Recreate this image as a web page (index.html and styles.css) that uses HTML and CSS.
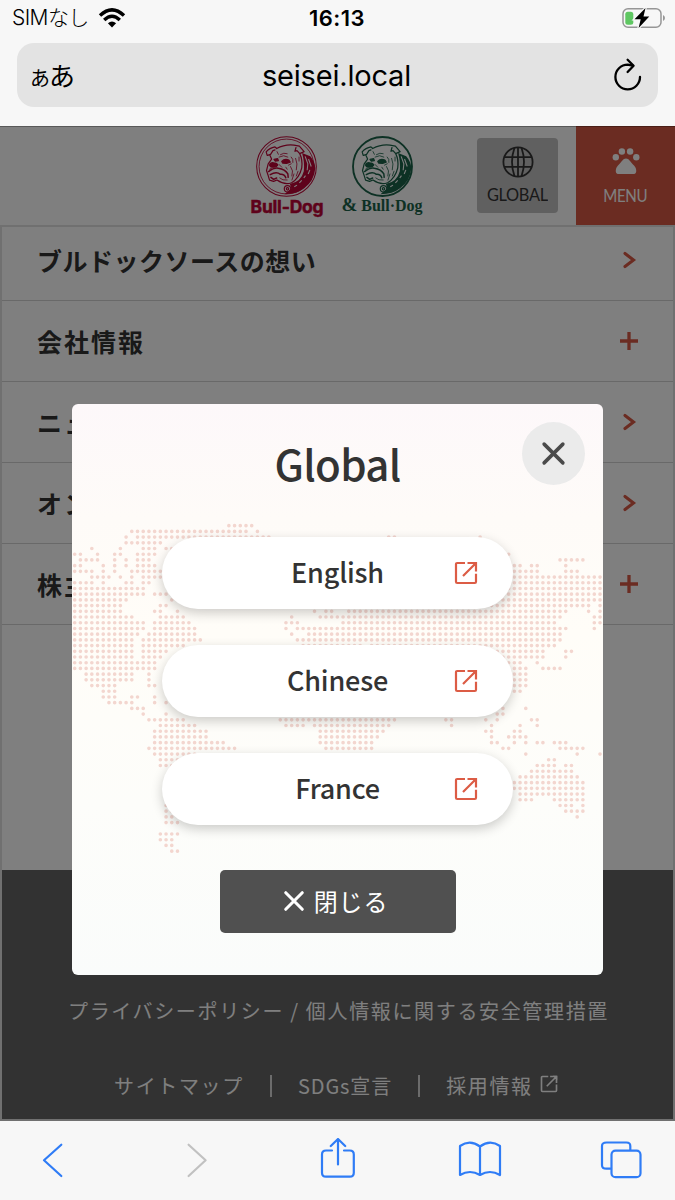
FILE: index.html
```html
<!DOCTYPE html>
<html lang="ja">
<head>
<meta charset="utf-8">
<meta name="viewport" content="width=device-width">
<title>ブルドックソース</title>
<link rel="stylesheet" href="styles.css">
</head>
<body>
<svg class="defs" aria-hidden="true">
  <symbol id="external" viewBox="0 0 24 24">
    <path d="M11 2H3.2Q2 2 2 3.2V20.8Q2 22 3.2 22H20.8Q22 22 22 20.8V12.8M13.5 2H22V10.5M22 2L9 15" fill="none" stroke="currentColor" stroke-width="2.2"/>
    <path d="M17 1H23V7Z" fill="currentColor"/>
  </symbol>
  <symbol id="cross" viewBox="0 0 24 24">
    <path d="M3 3L21 21M21 3L3 21" fill="none" stroke="currentColor" stroke-width="3.4" stroke-linecap="round"/>
  </symbol>
  <symbol id="chevron" viewBox="0 0 14 18">
    <path d="M2 2.5L10.5 9L2 15.5" fill="none" stroke="currentColor" stroke-width="3.1" stroke-linecap="round"/>
  </symbol>
  <symbol id="plus" viewBox="0 0 18 18">
    <path d="M9 0V18M0 9H18" fill="none" stroke="currentColor" stroke-width="3.3"/>
  </symbol>
  <symbol id="dog" viewBox="0 0 180 180">
    <path d="M136 50L160 60Q174 76 175 95Q172 132 142 154Q121 171 84 172L104 154L100 142Q134 134 141 104Q144 78 136 50Z" fill="currentColor"/>
    <g fill="none" stroke="currentColor" stroke-width="3.6" stroke-linecap="round" stroke-linejoin="round">
      <path d="M33 57L30 47Q40 35 56 32L61 37Q85 24 112 27L128 30L142 46L129 52L121 43L115 45L118 34M34 57L43 54L50 43L56 41M41 57L46 68L36 82L31 102L36 117L40 130L52 134L62 130Q85 146 105 138Q128 124 135 94Q138 70 129 52"/>
      <path d="M37 105Q54 92 66 95Q86 98 94 112L95 122M42 114Q60 104 72 113Q84 112 88 123M44 122L52 128L61 124" stroke-width="4.4"/>
      <path d="M40 86Q42 78 52 79Q63 79 64 86Q60 93 50 92Q42 93 40 86ZM76 75Q84 66 97 71L101 77L90 81L79 80ZM53 69L64 67L66 73L57 74Z" fill="currentColor"/>
      <path d="M68 62Q82 54 94 62M72 55Q82 48 92 52M104 62Q111 68 109 78M68 84L76 92M102 90Q112 102 106 118M117 66Q124 82 119 100M112 112L106 130M96 86L104 82M70 124Q78 132 92 130M62 46L66 54M127 62V74M124 104L119 118M88 92L92 98M40 98L46 95" stroke-width="2.4"/>
      <circle cx="93" cy="156" r="9.5"/><circle cx="93" cy="156" r="3.5"/>
    </g>
    <path class="cut" d="M145 60L153 82L151 101M155 68L163 90M159 100L154 112M113 150L121 145M128 138L135 131M141 124L146 117" fill="none" stroke="#fff" stroke-width="3.2"/>
  </symbol>
</svg>

<div class="phone">
  <header class="browser-top">
    <div class="status">
      <span class="carrier">SIMなし</span>
      <svg class="wifi" viewBox="0 0 28 20" width="28" height="20">
        <g fill="none" stroke="#000" stroke-width="3.4"><path d="M2 7.6Q14 -3.8 26 7.6"/><path d="M6.2 12Q14 4.6 21.8 12"/></g>
        <path d="M9.9 15.3Q14 11.6 18.1 15.3L14 19.5Z"/>
      </svg>
      <time class="clock">16:13</time>
      <svg class="battery" viewBox="0 0 44 22" width="44" height="22">
        <rect x="1" y="1.8" width="38" height="18.5" rx="5" fill="none" stroke="#969696" stroke-width="1.5"/>
        <path d="M41 8V14Q43 13 43 11Q43 9 41 8Z" fill="#969696"/>
        <rect x="3.3" y="4.7" width="8" height="13" rx="2.5" fill="#5fc762"/>
        <path d="M23.5 1L12.5 12.3H18.7L16.6 21L27.3 9.5H21.5Z" stroke="#f7f7f7" stroke-width="2.5" paint-order="stroke"/>
      </svg>
    </div>
    <div class="address">
      <span class="reader"><small>あ</small>あ</span>
      <span class="domain">seisei.local</span>
      <svg class="reload" viewBox="0 0 30 36" width="30" height="36">
        <g fill="none" stroke="#000" stroke-width="2.3" stroke-linecap="round" stroke-linejoin="round">
          <path d="M27 20A12.3 12.3 0 1 1 14.7 7.7L19.5 8.5"/><path d="M14.6 2.7L20.6 8.7L14.6 15"/>
        </g>
      </svg>
    </div>
  </header>

  <main class="site">
    <div class="site-header">
      <div class="brand brand-red">
        <svg viewBox="0 0 180 180" width="61" height="61">
          <g fill="none" stroke="currentColor"><circle cx="90" cy="90" r="88" stroke-width="3"/><circle cx="90" cy="90" r="81" stroke-width="2.5"/></g>
          <use href="#dog"/>
        </svg>
        <span>Bull-Dog</span>
      </div>
      <div class="brand brand-green">
        <svg viewBox="0 0 180 180" width="61" height="61">
          <circle cx="90" cy="90" r="87" fill="none" stroke="currentColor" stroke-width="5.5"/>
          <use href="#dog"/>
        </svg>
        <span><b>&amp;</b> Bull·Dog</span>
      </div>
      <div class="global-btn">
        <svg viewBox="0 0 32 32" width="32" height="32">
          <g fill="none" stroke="currentColor" stroke-width="1.8"><circle cx="16" cy="16" r="14.6"/><path d="M12.5 1.8Q7.5 16 12.5 30.2M19.5 1.8Q24.5 16 19.5 30.2M16 1.4V30.6M2.5 11.2H29.5M2.5 20.8H29.5"/></g>
        </svg>
        <span>GLOBAL</span>
      </div>
      <div class="menu-btn">
        <svg viewBox="0 0 28 28" width="28" height="28">
          <g fill="currentColor"><circle cx="3.8" cy="10.3" r="3.2"/><circle cx="9.9" cy="4.5" r="3.2"/><circle cx="18.1" cy="4.5" r="3.2"/><circle cx="24.3" cy="10.3" r="3.2"/>
          <path d="M14 11.5C17 11.5 18.5 15 22 18.5C25 21.5 25 27 22 27H6C3 27 3 21.5 6 18.5C9.5 15 11 11.5 14 11.5Z"/></g>
        </svg>
        <span>MENU</span>
      </div>
    </div>
    <ul class="nav">
      <li><span>ブルドックソースの想い</span><svg class="chev"><use href="#chevron"/></svg></li>
      <li><span>会社情報</span><svg class="plus"><use href="#plus"/></svg></li>
      <li><span>ニュース</span><svg class="chev"><use href="#chevron"/></svg></li>
      <li><span>オンラインショップ</span><svg class="chev"><use href="#chevron"/></svg></li>
      <li><span>株主・投資家情報</span><svg class="plus"><use href="#plus"/></svg></li>
    </ul>
    <footer class="site-footer">
      <div class="policy">プライバシーポリシー / 個人情報に関する安全管理措置</div>
      <div class="links">
        <span>サイトマップ</span><i></i><span class="sdgs">SDGs宣言</span><i></i><span>採用情報</span><svg><use href="#external"/></svg>
      </div>
    </footer>

    <div class="overlay">
      <section class="modal">
        <svg class="map" viewBox="-.47 -21.31 92.99 100" width="531" height="571">
          <path d="M27 0h4.1M10 1h20.1M32 1h.1M9 2h.1M11 2h23.1M55 2h1.1M71 2h.1M9 3h6.1M3 4h.1M8 4h.1M12 4h2.1M16 4h1.1M0 5h1.1M4 5h.1M7 5h1.1M11 5h3.1M76 5h.1M1 6h3.1M7 6h.1M9 6h.1M11 6h2.1M85 6h4.1M0 7h1.1M5 7h.1M7 7h.1M9 7h.1M11 7h3.1M77 7h1.1M80 7h1.1M86 7h.1M0 8h3.1M5 8h.1M7 8h.1M10 8h5.1M77 8h4.1M86 8h2.1M3 9h3.1M8 9h.1M10 9h.1M12 9h3.1M76 9h16.1M0 10h3.1M5 10h.1M9 10h1.1M12 10h1.1M75 10h17.1M0 11h12.1M75 11h17.1M0 12h12.1M14 12h2.1M75 12h17.1M0 13h9.1M17 13h.1M73 13h19.1M0 14h8.1M15 14h1.1M71 14h19.1M92 14h.1M0 15h8.1M14 15h1.1M18 15h.1M42 15h.1M44 15h1.1M48 15h38.1M90 15h.1M92 15h.1M0 16h10.1M15 16h4.1M38 16h.1M43 16h42.1M91 16h1.1M0 17h12.1M14 17h6.1M37 17h2.1M47 17h37.1M91 17h1.1M0 18h12.1M14 18h7.1M37 18h.1M39 18h47.1M91 18h.1M0 19h11.1M13 19h8.1M38 19h.1M41 19h44.1M0 20h10.1M12 20h8.1M21 20h1.1M39 20h46.1M0 21h10.1M12 21h7.1M40 21h10.1M52 21h32.1M0 22h10.1M12 22h4.1M74 22h8.1M86 22h1.1M0 23h10.1M12 23h3.1M75 23h7.1M86 23h.1M0 24h14.1M76 24h2.1M81 24h.1M0 25h14.1M77 25h2.1M82 25h3.1M2 26h8.1M13 26h.1M77 26h2.1M2 27h8.1M13 27h.1M77 27h2.1M3 28h4.1M13 28h1.1M77 28h2.1M5 29h2.1M77 29h1.1M5 30h2.1M10 30h1.1M14 30h.1M6 31h4.1M14 31h.1M16 31h.1M10 32h2.1M75 32h.1M79 32h.1M12 33h.1M16 33h.1M74 33h1.1M13 34h6.1M36 34h20.1M65 34h1.1M72 34h.1M74 34h.1M80 34h1.1M15 35h6.1M37 35h3.1M42 35h13.1M66 35h.1M73 35h.1M78 35h.1M81 35h.1M14 36h9.1M43 36h11.1M72 36h1.1M77 36h1.1M14 37h9.1M43 37h10.1M73 37h.1M76 37h3.1M14 38h12.1M43 38h9.1M73 38h1.1M77 38h.1M79 38h.1M81 38h1.1M84 38h2.1M13 39h15.1M44 39h8.1M75 39h1.1M85 39h4.1M14 40h7.1M79 40h.1M88 40h.1M92 40h.1M15 41h5.1M83 41h1.1M15 42h4.1M81 42h3.1M86 42h1.1M80 43h7.1M78 44h10.1M77 45h12.1M77 46h12.1M78 47h11.1M78 48h2.1M84 48h5.1M16 49h.1M85 49h2.1M89 49h.1M16 50h1.1M86 50h3.1M16 51h1.1M88 51h.1M16 52h2.1M15 54h3.1M15 55h2.1M16 56h1.1M17 57h1.1"/>
        </svg>
        <button class="close-round"><svg><use href="#cross"/></svg></button>
        <h2>Global</h2>
        <div class="langs">
          <a><span>English</span><svg><use href="#external"/></svg></a>
          <a><span>Chinese</span><svg><use href="#external"/></svg></a>
          <a><span>France</span><svg><use href="#external"/></svg></a>
        </div>
        <button class="close"><svg><use href="#cross"/></svg><span>閉じる</span></button>
      </section>
    </div>
  </main>

  <nav class="toolbar">
    <svg viewBox="0 0 44 44"><path d="M30.3 6.7L13 22.3L30.3 38"/></svg>
    <svg class="off" viewBox="0 0 44 44"><path d="M15.6 6.7L32.6 22.3L15.6 38"/></svg>
    <svg viewBox="0 0 44 44"><path d="M16 12.5H10Q6 12.5 6 16.5V34.7Q6 38.7 10 38.7H33.8Q37.8 38.7 37.8 34.7V16.5Q37.8 12.5 33.8 12.5H28M22 26.5V1.5M14.8 8L22 1L29.2 8"/></svg>
    <svg viewBox="0 0 44 44"><path d="M22 8.5Q12 1 2 8V37Q12 31 22 37Q32 31 42 37V8Q32 1 22 8.5V37"/></svg>
    <svg viewBox="0 0 44 44"><path d="M10.5 30.7H6.5Q2 30.7 2 27.2V8Q2 4.5 6.5 4.5H26.5Q30.3 4.5 30.3 8V12"/><rect x="11.5" y="12.7" width="29" height="26.5" rx="4"/></svg>
  </nav>
</div>
</body>
</html>
```
FILE: styles.css
```css
* { box-sizing: border-box; }
body {
  margin: 0;
  font-family: "Noto Sans CJK JP", sans-serif;
  color: #333;
}
.defs { position: absolute; width: 0; height: 0; }
.phone {
  width: 675px;
  height: 1200px;
  display: flex;
  flex-direction: column;
  overflow: hidden;
}

/* browser chrome */
.browser-top {
  height: 126px;
  flex: none;
  background: #f7f7f7;
  color: #000;
  font-family: Inter, "Noto Sans CJK JP", sans-serif;
}
.status {
  height: 43px;
  padding: 0 9px 7px 12px;
  display: grid;
  grid-template-columns: 86px 189px 100px 1fr;
  align-items: center;
}
.carrier { font-size: 21px; line-height: 24px; white-space: nowrap; font-weight: 300; letter-spacing: -.6px; }
.clock { font-size: 22px; font-weight: 600; text-align: center; line-height: 24px; letter-spacing: .5px; }
.battery { justify-self: end; }
.address {
  height: 64px;
  margin: 0 17px;
  padding: 0 15px 0 13px;
  border-radius: 17px;
  background: #e3e3e3;
  display: grid;
  grid-template-columns: 60px 1fr 60px;
  align-items: center;
}
.reader { font: 400 26px/30px "Noto Sans CJK JP", sans-serif; letter-spacing: -1px; white-space: nowrap; padding-top: 2px; }
.reader small { font-size: 20px; }
.domain { font-size: 29px; text-align: center; line-height: 32px; letter-spacing: -.2px; padding-top: 2px; }
.reload { justify-self: end; }

/* site */
.site {
  position: relative;
  height: 995px;
  flex: none;
  background: #fff;
  border: solid #e0e0e0;
  border-width: 0 2px 2px;
}
.site-header {
  height: 99px;
  margin: 0 -2px;
  display: flex;
  background: #fff;
  white-space: nowrap;
}
.brand {
  display: flex;
  flex-direction: column;
  align-items: center;
  padding-top: 10px;
}
.brand-red { width: 80px; margin-left: 246px; color: #bd0536; }
.brand-green { width: 90px; margin-left: 11px; color: #1b6249; }
.brand-red span { font: 700 17.5px/20px Inter, sans-serif; letter-spacing: -.2px; -webkit-text-stroke: .5px; padding-left: 2px; }
.brand-green span { font: 700 16px/16px "Liberation Serif", serif; }
.brand-green b { font-size: 19px; }
.global-btn {
  width: 81px;
  height: 75px;
  margin: 12px 0 0 50px;
  border-radius: 4px;
  background: #c0c0c0;
  display: flex;
  flex-direction: column;
  align-items: center;
  padding-top: 8px;
}
.global-btn span, .menu-btn span { font: 400 18px/22px Lato, sans-serif; letter-spacing: -.4px; transform: scaleX(.91); }
.global-btn span { margin-top: 5px; }
.menu-btn {
  width: 99px;
  margin-left: auto;
  background: #d65844;
  color: #fff;
  display: flex;
  flex-direction: column;
  align-items: center;
  padding-top: 21px;
}
.menu-btn span { margin-top: 9px; transform: scaleX(.84); }
.nav { list-style: none; margin: 0; padding: 0; border-top: 2px solid #e0e0e0; }
.nav li {
  height: 81px;
  padding: 0 35px 1px 35px;
  border-bottom: 1px solid #d2d2d2;
  display: flex;
  align-items: center;
  justify-content: space-between;
}
.nav li:first-child { height: 74px; padding-bottom: 8px; }
.nav span {
  font-size: 25px;
  font-weight: 700;
  line-height: 36px;
  letter-spacing: 2px;
}
.nav li:first-child span { letter-spacing: .5px; }
.nav svg { color: #d65844; }
.nav .chev { width: 14px; height: 18px; margin-right: 1px; }
.nav .plus { width: 18px; height: 18px; }
.site-footer {
  height: 249px;
  margin-top: 245px;
  background: #646464;
  color: #fff;
  font-size: 20px;
  letter-spacing: 1.65px;
  line-height: 30px;
  white-space: nowrap;
}
.policy { padding: 126px 0 0 66px; }
.links { display: flex; align-items: center; padding: 45px 0 0 112px; }
.links i { width: 2px; height: 22px; margin: 0 26px; background: #d8d8d8; }
.links .sdgs { letter-spacing: .9px; }
.links svg { width: 18px; height: 18px; margin-left: 7px; margin-top: -4px; }

/* dialog */
.overlay {
  position: absolute;
  inset: 0 -2px -2px;
  background: rgba(0, 0, 0, .5);
  border-top: 1px solid rgba(0, 0, 0, .3);
  display: flex;
  justify-content: center;
  align-items: flex-start;
  padding-top: 277px;
}
.modal {
  position: relative;
  width: 531px;
  height: 571px;
  border-radius: 6px;
  overflow: hidden;
  background: linear-gradient(#fdf8fa, #fefbf8 20%, #fffdf8 40%, #fdfdfa 70%, #fafcfb);
  display: flex;
  flex-direction: column;
  align-items: center;
}
.map { position: absolute; inset: 0; }
.map path { fill: none; stroke: #f3d6cf; stroke-width: .64; stroke-linecap: round; stroke-dasharray: 0 1; }
.close-round {
  position: absolute;
  top: 18px;
  right: 18px;
  width: 63px;
  height: 63px;
  padding: 0;
  border: 0;
  border-radius: 50%;
  background: #ebebeb;
  color: #4a4a4a;
  display: grid;
  place-items: center;
}
.close-round svg { width: 25px; height: 25px; }
h2 { position: relative; margin: 28px 0 0; font-size: 42px; line-height: 62px; font-weight: 500; letter-spacing: -.7px; }
.langs { position: relative; margin-top: 43px; display: grid; gap: 36px; }
.langs a {
  width: 351px;
  height: 72px;
  border-radius: 36px;
  background: #fff;
  box-shadow: 0 4px 12px rgba(0, 0, 0, .2);
  display: grid;
  grid-template-columns: 35px 1fr 35px;
  align-items: center;
  padding: 0 35px;
}
.langs span { grid-column: 2; text-align: center; font-size: 27px; line-height: 40px; font-weight: 500; letter-spacing: -.2px; margin-top: -3px; }
.langs svg { width: 24px; height: 24px; color: #dc5c45; justify-self: end; }
.close {
  position: relative;
  width: 236px;
  height: 63px;
  margin-top: 45px;
  padding: 0 4px 2px 0;
  border: 0;
  border-radius: 5px;
  background: #505050;
  color: #fff;
  font: 400 24px/34px "Noto Sans CJK JP", sans-serif;
  letter-spacing: .8px;
  display: flex;
  align-items: center;
  justify-content: center;
  gap: 9px;
}
.close svg { width: 22px; height: 22px; }

.toolbar {
  flex: 1;
  background: #f7f7f7;
  display: flex;
  justify-content: space-between;
  padding: 17px 31px 0;
}
.toolbar svg { width: 44px; height: 44px; fill: none; stroke: #2f7cf6; stroke-width: 2.2; stroke-linejoin: round; stroke-linecap: round; }
.toolbar .off { stroke: #c1c1c1; }
```
